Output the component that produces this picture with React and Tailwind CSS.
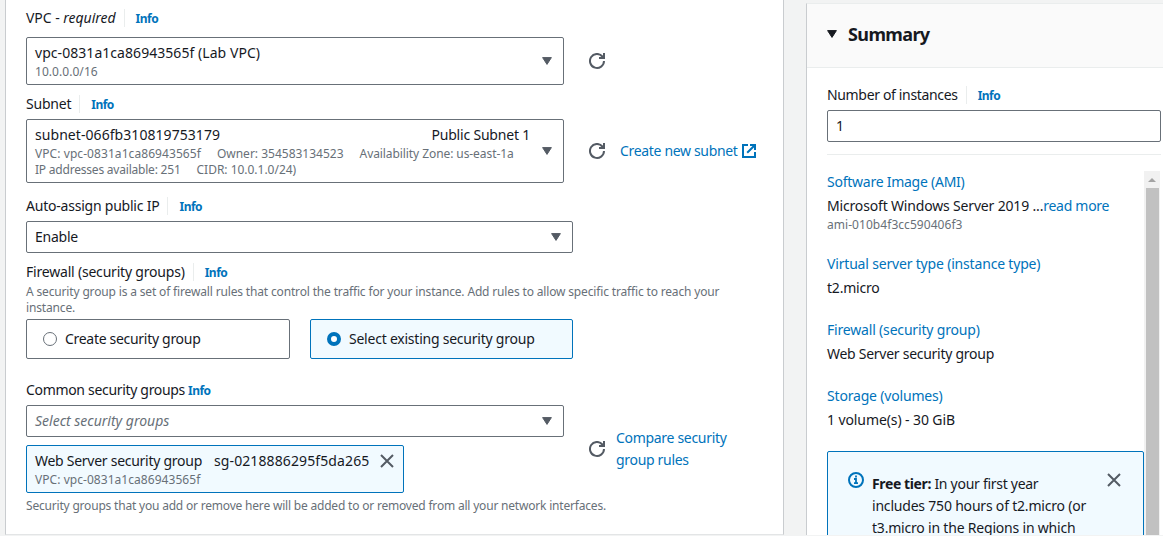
function Caret({ className = "text-[#545b64]" }) {
  return (
    <svg width="10" height="8" viewBox="0 0 10 8" className={`shrink-0 ${className}`}>
      <path d="M0.6 0.6h8.8L5 7.4z" fill="currentColor" stroke="currentColor" strokeWidth="1" strokeLinejoin="round" />
    </svg>
  );
}

function Refresh() {
  return (
    <svg width="16" height="16" viewBox="0 0 16 16" className="shrink-0 text-[#545b64]" fill="none" stroke="currentColor" strokeWidth="2">
      <path d="M15 8a7 7 0 1 1-1.6-4.5L15 5" />
      <path d="M10 5h5V0" />
    </svg>
  );
}

function External() {
  return (
    <svg width="14" height="14" viewBox="0 0 14 14" className="shrink-0" fill="none" stroke="currentColor" strokeWidth="2">
      <path d="M6 1H1v12h12V8" />
      <path d="M8 1h5v5M13 1L5.2 8.8" />
    </svg>
  );
}

function Close() {
  return (
    <svg width="14" height="14" viewBox="0 0 14 14" className="shrink-0 text-[#545b64]" stroke="currentColor" strokeWidth="2">
      <path d="M1 1l12 12M13 1L1 13" />
    </svg>
  );
}

function Info() {
  return <a className="pt-0.5 text-xs leading-5 font-bold tracking-[-0.5px] text-[#0073bb]">Info</a>;
}

function Label({ children, className = "" }) {
  return (
    <div className={`flex h-5 items-center ${className}`}>
      <span className="tracking-[-0.22px]">{children}</span>
      <span className="ml-2 mr-[11px] h-[18px] w-px bg-[#eaeded]" />
      <Info />
    </div>
  );
}

const box = "flex items-center justify-between rounded-[2px] border border-[#687078] bg-white pl-2";

function SummaryItem({ title, children, className = "" }) {
  return (
    <div className={className}>
      <div className="h-5 tracking-[-0.18px] text-[#0073bb]">{title}</div>
      <div className="mt-1 h-5 tracking-[-0.2px]">{children}</div>
    </div>
  );
}

function NetworkSettings() {
  return (
    <section className="h-[535px] w-[779px] shrink-0 border border-t-0 border-[#c9cccf] border-b-[#e3e5e6] bg-white pl-5 pt-2">
      <Label>
        <span className="tracking-[-0.03px]">VPC - <i>required</i></span>
      </Label>
      <div className="mt-[9px] flex items-center gap-[25px]">
        <div className={`${box} h-12 w-[538px] pr-[11px]`}>
          <div>
            <div className="h-5 tracking-[0.05px]">vpc-0831a1ca86943565f (Lab VPC)</div>
            <div className="-mb-px pt-px text-xs leading-4 tracking-[0.05px] text-[#687078]">10.0.0.0/16</div>
          </div>
          <Caret />
        </div>
        <Refresh />
      </div>

      <Label className="mt-[9px]">Subnet</Label>
      <div className="mt-[5px] flex items-center">
        <div className={`${box} h-16 w-[538px] pr-[11px]`}>
          <div className="w-[495px]">
            <div className="flex h-5 justify-between">
              <span className="tracking-[0.06px]">subnet-066fb310819753179</span>
              <span className="tracking-[-0.2px]">Public Subnet 1</span>
            </div>
            <div className="flex gap-4 whitespace-nowrap pt-px text-xs leading-4 text-[#687078]">
              <span className="tracking-[0.07px]">VPC: vpc-0831a1ca86943565f</span>
              <span>Owner: 354583134523</span>
              <span className="tracking-[-0.08px]">Availability Zone: us-east-1a</span>
            </div>
            <div className="-mb-px flex gap-4 text-xs leading-4 text-[#687078]">
              <span className="tracking-[-0.21px]">IP addresses available: 251</span>
              <span className="tracking-[-0.02px]">CIDR: 10.0.1.0/24)</span>
            </div>
          </div>
          <Caret />
        </div>
        <span className="ml-[25px] flex"><Refresh /></span>
        <a className="ml-[15px] flex items-center gap-1 tracking-[-0.33px] text-[#0073bb]">
          Create new subnet <External />
        </a>
      </div>

      <Label className="mt-[13px]">Auto-assign public IP</Label>
      <div className={`${box} mt-[5px] h-8 w-[547px] pr-[11px]`}>
        <span className="tracking-[-0.25px]">Enable</span>
        <Caret />
      </div>

      <Label className="mt-[9px]">
        <span className="tracking-[-0.2px]">Firewall (security groups)</span>
      </Label>
      <p className="mt-0.5 w-[700px] text-xs leading-4 tracking-[-0.157px] text-[#687078]">
        A security group is a set of firewall rules that control the traffic for your instance. Add rules to allow specific traffic to reach your
        <br />
        instance.
      </p>
      <div className="mt-[3px] flex gap-5">
        <div className="flex h-10 w-[264px] items-center rounded-[2px] border border-[#687078] pl-4">
          <span className="size-3.5 rounded-full border border-[#687078]" />
          <span className="ml-2 tracking-[-0.3px]">Create security group</span>
        </div>
        <div className="flex h-10 w-[263px] items-center rounded-[2px] border border-[#0073bb] bg-[#f1faff] pl-4">
          <span className="size-3.5 rounded-full border-4 border-[#0073bb] bg-white" />
          <span className="ml-2 tracking-[-0.23px]">Select existing security group</span>
        </div>
      </div>

      <div className="mt-[21px] flex items-start">
        <div className="w-[538px]">
          <div className="flex h-5 items-center gap-[3px]">
            <span className="tracking-[-0.32px]">Common security groups</span>
            <Info />
          </div>
          <div className={`${box} mt-[5px] h-8 pr-[11px]`}>
            <i className="text-[#687078]">Select security groups</i>
            <Caret />
          </div>
          <div className="mt-2 h-12 w-[378px] rounded-[2px] border border-[#0073bb] bg-[#f1faff] pl-2 pt-[5px]">
            <div className="flex h-5 items-center">
              <span className="tracking-[-0.27px]">Web Server security group</span>
              <span className="ml-3 mr-[11px] tracking-[0.11px]">sg-0218886295f5da265</span>
              <Close />
            </div>
            <div className="pt-px text-xs leading-4 tracking-[0.05px] text-[#687078]">VPC: vpc-0831a1ca86943565f</div>
          </div>
          <p className="mt-[5px] whitespace-nowrap text-xs leading-4 tracking-[-0.195px] text-[#687078]">
            Security groups that you add or remove here will be added to or removed from all your network interfaces.
          </p>
        </div>
        <div className="ml-[25px] mt-[47px] flex items-center">
          <Refresh />
          <a className="ml-[11px] leading-[22px] tracking-[-0.31px] text-[#0073bb]">
            Compare security
            <br />
            group rules
          </a>
        </div>
      </div>
    </section>
  );
}

function Summary() {
  return (
    <aside className="ml-[22px] mt-[3px] flex h-[532px] w-[357px] shrink-0 flex-col border-l border-t border-[#c9cccf] border-t-[#eaeded] bg-white">
      <header className="flex h-16 shrink-0 items-start gap-[11px] border-b border-[#eaeded] bg-[#fafafa] pl-5 pt-4">
        <Caret className="mt-[10px] text-[#16191f]" />
        <h2 className="text-lg font-bold tracking-[-0.62px]">Summary</h2>
      </header>
      <div className="pl-5 pt-[17px]">
        <Label>
          <span className="tracking-[-0.34px]">Number of instances</span>
        </Label>
        <div className={`${box} mt-[5px] h-8 w-[334px]`}>1</div>
        <div className="mt-3 h-px w-[334px] bg-[#eaeded]" />
      </div>
      <div className="mt-4 flex min-h-0 flex-1 overflow-hidden pl-5">
        <div className="w-[317px] shrink-0">
          <SummaryItem className="pt-px" title={<span className="tracking-[-0.25px]">Software Image (AMI)</span>}>
            <span className="tracking-[-0.17px]">Microsoft Windows Server 2019 ...</span>
            <a className="tracking-[-0.28px] text-[#0073bb]">read more</a>
          </SummaryItem>
          <div className="-mb-px pt-px text-xs leading-4 tracking-[0.05px] text-[#687078]">ami-010b4f3cc590406f3</div>
          <SummaryItem className="mt-[22px]" title="Virtual server type (instance type)">t2.micro</SummaryItem>
          <SummaryItem className="mt-[22px]" title="Firewall (security group)">
            <span className="tracking-[-0.27px]">Web Server security group</span>
          </SummaryItem>
          <SummaryItem className="mt-[22px]" title="Storage (volumes)">
            <span className="tracking-[-0.1px]">1 volume(s) - 30 GiB</span>
          </SummaryItem>
          <div className="mt-[21px] flex h-40 items-start rounded-[2px] border border-[#0073bb] bg-[#f1faff] pl-5 pt-5">
            <svg width="16" height="16" viewBox="0 0 16 16" className="shrink-0 text-[#0073bb]" fill="none" stroke="currentColor" strokeWidth="2">
              <circle cx="8" cy="8" r="7" />
              <path d="M8 11V7H6M6 11.2h4M8 3.6v2" strokeWidth="1.8" />
            </svg>
            <p className="ml-2 mt-px w-[235px] whitespace-nowrap leading-[22px] tracking-[-0.2px]">
              <b className="tracking-[-0.38px]">Free tier:</b>
              <span className="tracking-[-0.28px]"> In your first year</span>
              <br />
              includes 750 hours of t2.micro (or
              <br />
              t3.micro in the Regions in which
            </p>
            <span className="mt-px flex"><Close /></span>
          </div>
        </div>
        <div className="flex w-4 flex-col items-center bg-[#f1f1f1]">
          <div className="flex h-[17px] items-center">
            <svg width="8" height="4" viewBox="0 0 8 4"><path d="M0 4l4-4 4 4z" fill="#a3a3a3" /></svg>
          </div>
          <div className="w-[13px] flex-1 bg-[#c1c1c1]" />
        </div>
      </div>
    </aside>
  );
}

export default function App() {
  return (
    <main className="flex h-[536px] w-[1163px] overflow-hidden bg-[#f2f3f3] pl-[5px] font-['Noto_Sans',sans-serif] text-sm leading-5 text-[#16191f]">
      <NetworkSettings />
      <Summary />
    </main>
  );
}
